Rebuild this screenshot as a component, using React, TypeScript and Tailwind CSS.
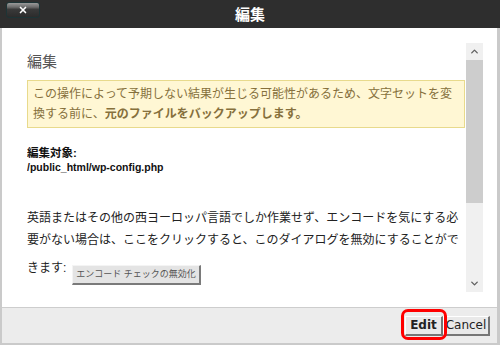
import { X, ChevronUp, ChevronDown } from "lucide-react"

export default function App() {
    return (
        <div className="w-[500px] h-[345px] flex flex-col bg-white font-['Liberation_Sans','Noto_Sans_CJK_JP',sans-serif] overflow-hidden">
            {/* title bar */}
            <div className="h-[28px] shrink-0 bg-[#2e2e2e] grid grid-cols-[1fr_auto_1fr] items-start">
                <div className="pl-[6px] pt-[2px]">
                    <div className="w-[34px] h-[16px] rounded-[3px] border border-[#1d3436] bg-[linear-gradient(to_bottom,#9a9a9a_0%,#6a6a6a_30%,#3a3a3a_45%,#2c2c2c_100%)] flex items-center justify-center">
                        <X className="w-[10px] h-[10px] text-white" strokeWidth={4} />
                    </div>
                </div>
                <div className="h-[28px] flex items-center text-white font-bold text-[15px] leading-none">編集</div>
                <div />
            </div>

            {/* body */}
            <div className="flex-1 flex flex-col border-l-2 border-r-[3px] border-b-2 border-[#cacaca]">
                <div className="flex-1 bg-white pt-[15px] pb-[15px] pl-[25px] pr-[14px] flex min-h-0">
                    <div className="flex-1 overflow-hidden pr-[1px]">
                        <h2 className="mt-[9px] text-[15px] leading-[20px] text-[#555]">編集</h2>

                        <div className="mt-[8px] border border-[#e8da8c] bg-[#fff7d4] px-[5px] py-[3px] text-[12px] leading-[20px] text-[#86703c] whitespace-nowrap">
                            この操作によって予期しない結果が生じる可能性があるため、文字セットを変
                            <br />
                            換する前に、<span className="font-bold">元のファイルをバックアップします。</span>
                        </div>

                        <div className="mt-[18px] leading-[14px] font-bold text-[#111]">
                            <div className="text-[11.5px]">編集対象:</div>
                            <div className="text-[10.5px]">/public_html/wp-config.php</div>
                        </div>

                        <div className="mt-[33px] text-[12px] leading-[22px] text-[#222] whitespace-nowrap">
                            <div>英語またはその他の西ヨーロッパ言語でしか作業せず、エンコードを気にする必</div>
                            <div>要がない場合は、ここをクリックすると、このダイアログを無効にすることがで</div>
                            <div className="mt-[6px] flex items-start">
                                <span>きます:</span>
                                <button className="ml-[6px] mt-[8px] h-[20px] px-[3px] bg-[#e4e4e4] border border-[#f4f4f4] border-r-2 border-b-2 border-r-[#7a7a7a] border-b-[#7a7a7a] text-[9px] leading-none text-[#555]">
                                    エンコード チェックの無効化
                                </button>
                            </div>
                        </div>
                    </div>

                    {/* scrollbar */}
                    <div className="w-[17px] shrink-0 flex flex-col bg-[#f0f0f0]">
                        <div className="h-[17px] flex items-center justify-center">
                            <ChevronUp className="w-[11px] h-[11px] text-[#606060]" strokeWidth={3} />
                        </div>
                        <div className="h-[143px] bg-[#cdcdcd]" />
                        <div className="flex-1" />
                        <div className="h-[17px] flex items-center justify-center">
                            <ChevronDown className="w-[11px] h-[11px] text-[#606060]" strokeWidth={3} />
                        </div>
                    </div>
                </div>

                {/* footer */}
                <div className="h-[36px] shrink-0 border-t border-[#cdcdcd] bg-[#ececec] flex items-center justify-end pr-[7px] font-['DejaVu_Sans',sans-serif]">
                    <span className="relative flex">
                        <button className="h-[20px] w-[38px] bg-[#e9e9e9] border border-white border-r-2 border-b-2 border-r-[#767676] border-b-[#767676] text-[12px] leading-none font-bold text-[#222]">
                            Edit
                        </button>
                        <span className="absolute -left-[4px] -top-[7px] w-[46px] h-[31px] border-[3px] border-[#ff0000] rounded-[7px]" />
                    </span>
                    <button className="h-[20px] w-[47px] bg-[#e9e9e9] border border-white border-r-2 border-b-2 border-r-[#767676] border-b-[#767676] text-[12px] leading-none text-[#222]">
                        Cancel
                    </button>
                </div>
            </div>
        </div>
    )
}
